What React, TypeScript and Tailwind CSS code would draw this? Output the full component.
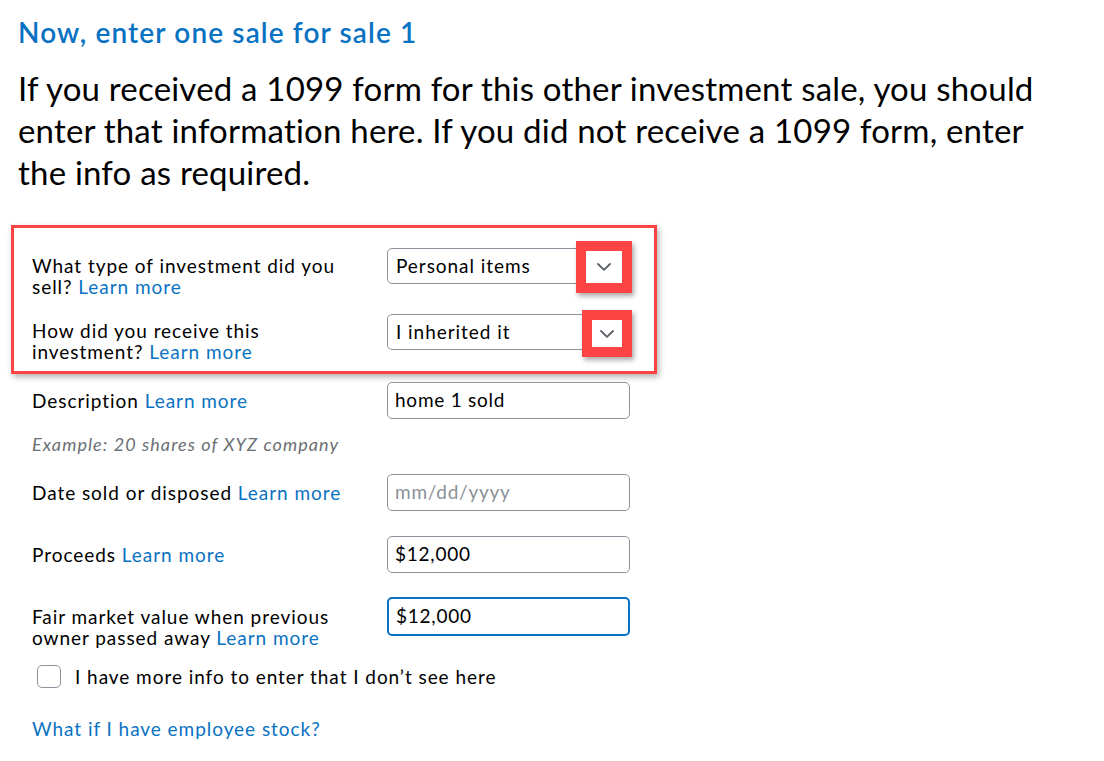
import React from "react";

const font = { fontFamily: "Lato, 'Noto Sans', sans-serif" };

function Chevron() {
  return (
    <svg width="16" height="10" viewBox="0 0 16 10" fill="none">
      <path d="M2 2 L8 7.8 L14 2" stroke="#5a5f66" strokeWidth="1.8" strokeLinecap="round" strokeLinejoin="round" />
    </svg>
  );
}

function Learn() {
  return <span className="text-[#0a72c2]">Learn more</span>;
}

function SelectBox({ value, boxClass }: { value: string; boxClass: string }) {
  return (
    <div className="relative shrink-0 w-[243px] h-[36px] rounded-[5px] border border-[#8b949c] bg-white flex items-center pl-[8px] text-[19px] tracking-[0.05em] text-black">
      {value}
      <div className={"absolute flex items-center justify-center bg-white border-[10px] border-[#fc4444] shadow-[2px_3px_5px_rgba(0,0,0,0.35)] " + boxClass}>
        <Chevron />
      </div>
    </div>
  );
}

function TextBox({ value, placeholder, focus }: { value?: string; placeholder?: string; focus?: boolean }) {
  return (
    <div
      className={
        "shrink-0 w-[243px] rounded-[5px] bg-white flex items-center pl-[7px] text-[19px] tracking-[0.04em] " +
        (focus ? "h-[39px] border-2 border-[#0a72c2]" : "h-[37px] border border-[#8b949c]")
      }
    >
      {value ? <span className="text-black">{value}</span> : <span className="text-[#8a9199]">{placeholder}</span>}
    </div>
  );
}

export default function App() {
  return (
    <div className="w-[1104px] h-[761px] bg-white overflow-hidden text-black" style={font}>
      <div className="pl-[18px] pt-[14px]">
        <h1 className="text-[28px] leading-[36px] font-semibold tracking-[0.04em] text-[#0a72c2]">Now, enter one sale for sale 1</h1>
        <p className="mt-[17px] text-[33px] leading-[42px] tracking-[0.006em]">
          If you received a 1099 form for this other investment sale, you should
          <br />
          enter that information here. If you did not receive a 1099 form, enter
          <br />
          the info as required.
        </p>
      </div>

      <div className="ml-[11px] mt-[32px] w-[646px] h-[149px] border-[3px] border-[#fc4444] shadow-[2px_3px_6px_rgba(0,0,0,0.3)] pl-[18px] pt-[20px] text-[19px] tracking-[0.05em]">
        <div className="flex">
          <div className="w-[355px] leading-[21px] pt-[7px]">
            What type of investment did you
            <br />
            sell? <Learn />
          </div>
          <SelectBox value="Personal items" boxClass="left-[188px] top-[-8px] w-[56px] h-[52px]" />
        </div>
        <div className="flex mt-[17px]">
          <div className="w-[355px] leading-[21px] pt-[6px]">
            How did you receive this
            <br />
            investment? <Learn />
          </div>
          <SelectBox value="I inherited it" boxClass="left-[194px] top-[-5px] w-[50px] h-[47px]" />
        </div>
      </div>

      <div className="pl-[32px] mt-[8px] text-[19px] tracking-[0.05em]">
        <div className="flex items-center">
          <div className="w-[355px] leading-[21px]">
            Description <Learn />
          </div>
          <TextBox value="home 1 sold" />
        </div>
        <div className="mt-[15px] italic text-[#6b6f73] text-[18px] tracking-[0.06em] leading-[21px]">Example: 20 shares of XYZ company</div>
        <div className="flex items-center mt-[19px]">
          <div className="w-[355px] leading-[21px]">
            Date sold or disposed <Learn />
          </div>
          <TextBox placeholder="mm/dd/yyyy" />
        </div>
        <div className="flex items-center mt-[25px]">
          <div className="w-[355px] leading-[21px]">
            Proceeds <Learn />
          </div>
          <TextBox value="$12,000" />
        </div>
        <div className="flex mt-[24px]">
          <div className="w-[355px] leading-[21px] pt-[9px]">
            Fair market value when previous
            <br />
            owner passed away <Learn />
          </div>
          <TextBox value="$12,000" focus />
        </div>
        <div className="flex items-center mt-[17px] ml-[5px]">
          <div className="w-[24px] h-[23px] rounded-[5px] border border-[#8b949c]" />
          <span className="ml-[14px] leading-[21px]">I have more info to enter that I don’t see here</span>
        </div>
        <div className="mt-[30px] text-[#0a72c2] leading-[21px]">What if I have employee stock?</div>
      </div>
    </div>
  );
}
